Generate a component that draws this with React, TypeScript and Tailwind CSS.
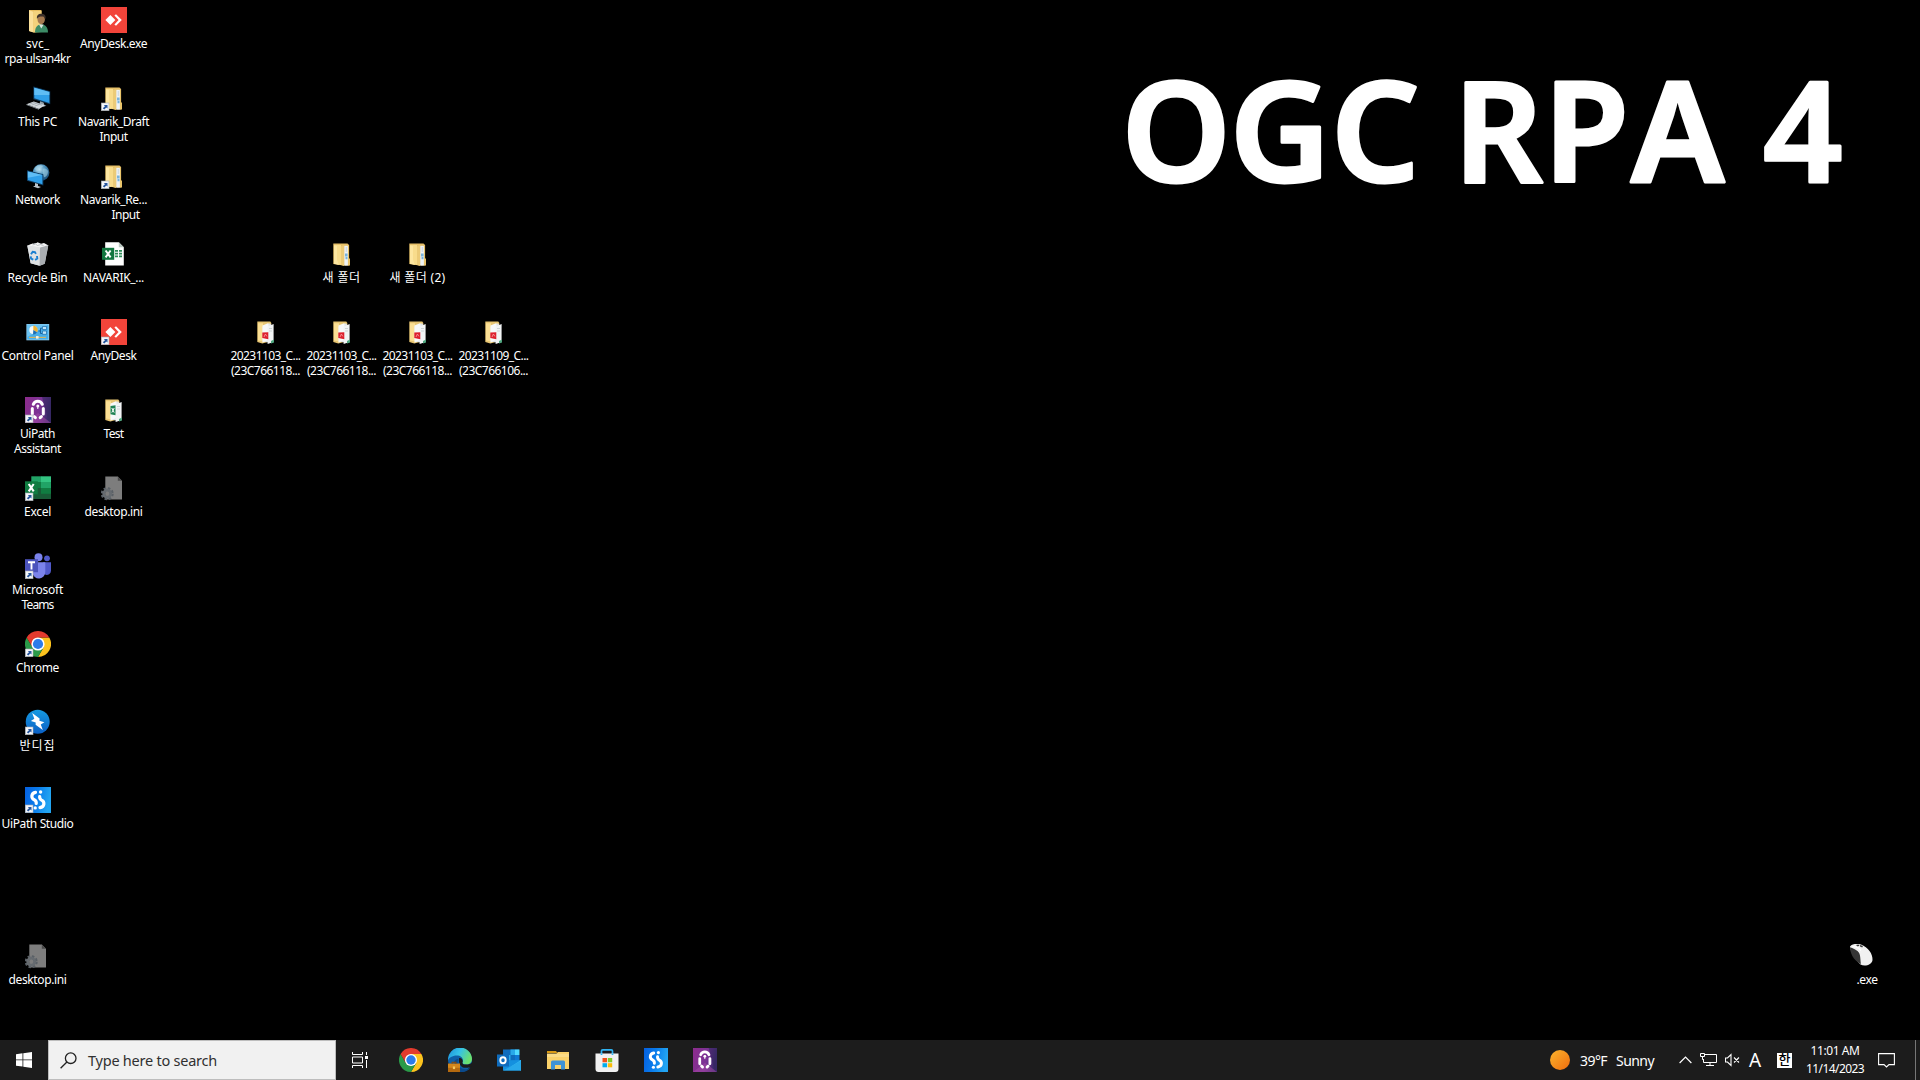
import { useLayoutEffect, useRef, type ReactNode } from "react";

/** A line of text whose tracking is adjusted so that it fills `w` pixels. */
function Fit({ w, children, className = "" }: { w: number; children: string; className?: string }) {
  const ref = useRef<HTMLSpanElement>(null);
  useLayoutEffect(() => {
    const el = ref.current;
    if (!el) return;
    el.style.letterSpacing = "0px";
    const natural = el.getBoundingClientRect().width;
    const gap = (w - natural) / children.length;
    el.style.letterSpacing = `${gap}px`;
  }, [w, children]);
  return (
    <span ref={ref} className={`inline-block whitespace-pre ${className}`}>
      {children}
    </span>
  );
}

function Svg({ children, size = 26, box = 26 }: { children: ReactNode; size?: number; box?: number }) {
  return (
    <svg width={size} height={size} viewBox={`0 0 ${box} ${box}`} className="block shrink-0">
      {children}
    </svg>
  );
}

const Shortcut = () => (
  <g>
    <rect x="0.3" y="18" width="7.7" height="7.7" fill="#f4f6f9" stroke="#a9adb3" strokeWidth="0.6" />
    <path d="M2.9 20h3.6v3.6L5.3 22.5 3.3 24.6 1.8 23.3 4 21.2z" fill="#27569d" />
  </g>
);

const FolderShape = () => (
  <g>
    <path d="M4.3 2.6h14.2l1.6 1.4v20.5h-5.8L4.3 23z" fill="#e6c069" />
    <path d="M5 4h7v20l-7-1.4z" fill="#f8dc8c" />
    <path d="M12 5.2 15 4v21l-3-1z" fill="#eccb77" />
    <path d="M15.3 4.8h3.6v19.8h-3.6z" fill="#eef3f7" />
    <path d="M16 12.5h2.6v3H16zM16.5 16h2v2.2h-2z" fill="#78b4dd" />
    <path d="M16.8 6h.8v5h-.8z" fill="#c2cfdb" />
    <path d="M19 4.5 20 6v11l1 1v6.4h-2z" fill="#e9c46b" />
    <path d="M5 4.4 8 5v14l2 5-5-1.2z" fill="#fde6a0" />
  </g>
);

const Folder = ({ link = false }) => (
  <Svg>
    <FolderShape />
    {link && <Shortcut />}
  </Svg>
);

const FolderDocs = ({ pdf = false }) => (
  <Svg>
    <path d="M4.3 2.6h13l1 1.4v18l-9 2.6-5-1.6z" fill="#e8c673" />
    <path d="M5 4.2h5v18.4l-5-1z" fill="#fbdf94" />
    <path d="M9.5 8 17 4.2l1.8 2.2V24l-9-1.5z" fill="#e1e6e8" />
    <path d="M9.5 6.4 15.5 4v16.8l-6 3z" fill="#f7f9fa" />
    <path d="m14.6 7.4 6-2.4v18l-6 2z" fill="#f2f4f5" />
    <path d="M16 9.5h3M16 12h3" stroke="#ced5d6" />
    <path d="m18 22 3-1.5v3l-3 1z" fill="#4fa67f" />
    {pdf ? (
      <>
        <path d="m9.3 13.5 6-.2v7l-6-1.2z" fill="#dd1f2d" />
        <path d="m11 18 1.4-3 1.5 2.4" stroke="#f7a3a7" strokeWidth=".8" fill="none" />
      </>
    ) : (
      <>
        <path d="m9.5 9 5-.8v10l-5-1z" fill="#208354" />
        <path d="m10.8 11 2.4 4.6M13.2 11l-2.4 4.6" stroke="#fff" strokeWidth="1" />
      </>
    )}
  </Svg>
);

const UserFolder = () => (
  <Svg>
    <path d="M4 3h12.5v21L9 25.6 4 24z" fill="#e7bd5f" />
    <path d="M4 3.3 8.5 4.8V25.6L4 24z" fill="#fbe09a" />
    <path d="M8.5 4h8v21l-8 .6z" fill="#f3d27c" />
    <path d="M10 25.4c0-5 2-8 6.3-8s6.700 3 6.700 8z" fill="#3c8b66" />
    <path d="m14 17.5 2.3 4 2.400-4z" fill="#d8e4dd" />
    <ellipse cx="16.2" cy="12.4" rx="3.7" ry="4.8" fill="#a4794f" />
    <path d="M12 12c-.6-3.600 1.400-5.200 4.300-5.200s5 1.500 4.200 5.200c-1-1.400-1.200-2.400-3-2.600-2.200 0-4.400-.2-5.500 2.600z" fill="#3b302a" />
  </Svg>
);

const ThisPC = () => (
  <Svg>
    <path d="m8.400 1.600 16.800 4.600v13L8.400 14.200z" fill="#0f3f66" />
    <path d="M9.300 2.800 24.300 7v11L9.300 13.300z" fill="#2f9fe9" />
    <path d="M9.300 2.800 24.300 7v3L9.300 10z" fill="#5fbdf5" />
    <path d="m15 16.300 3.600 1.100.8 2.600 2 .8-2.800 1-4-1.300z" fill="#93a2ad" />
    <path d="m1.400 19.200 7.400-2.700 11.200 3.700-6 3.700z" fill="#d5dade" />
    <path d="m4 19.300 5-1.800 8 2.700M6.400 20.200l5-1.800M9.500 21.200l5-1.900" stroke="#8b959d" strokeWidth=".6" fill="none" />
    <path d="m1.400 19.200 12.600 4.700v.9L1.400 20z" fill="#8c959c" />
  </Svg>
);

const Network = () => (
  <Svg>
    <defs>
      <radialGradient id="globe" cx=".4" cy=".3" r=".7">
        <stop offset="0" stopColor="#bfe3f3" />
        <stop offset=".5" stopColor="#4e93bd" />
        <stop offset="1" stopColor="#1c4f78" />
      </radialGradient>
    </defs>
    <circle cx="16" cy="9.6" r="8.4" fill="url(#globe)" />
    <path d="M10 5c2-3 6-3.500 8-2-1 2-3 2-4 4s-4 1-4-2zM18 6c2-1 4 0 5 2 0 4-2 6-4 6-1-3-2-5-1-8z" fill="#a8d4e6" opacity=".55" />
    <path d="m2 7.300 16.300 4v11.200L2 17.700z" fill="#0f3f66" />
    <path d="m2.900 8.500 14.500 3.600v9.100l-14.500-4.300z" fill="#2f9fe9" />
    <path d="m2.900 8.500 14.500 3.600-14.500 2.600z" fill="#5fbdf5" />
    <path d="m10 20 3 1v2l3 1-3 1.200-5-1.600 2-.8z" fill="#b9c3ca" />
  </Svg>
);

const RecycleBin = () => (
  <Svg>
    <path d="m2.300 4.600 8-2.600 13 2.300-3.600 18.400-5 2-9-2.400z" fill="#c9cdd0" />
    <path d="m2.300 4.600 12.700 2-.4 18.100-9-2.400z" fill="#dfe2e4" />
    <path d="m15 6.600 8.300-2.300-3.600 18.400-5 2z" fill="#a9adb1" />
    <path d="m3 4.500 4.500-2 2 1 3-2.300 3.500 1.500 3-.6 4 2.200-8 2.200z" fill="#f3f4f5" />
    <path d="m7.500 4 3-1 2 1.500 3-1 3 1" stroke="#a9afb4" strokeWidth=".7" fill="none" />
    <path d="m6 13.300 1.700-2.600 2.200.4 1 1.800M12 15l.3 2.600-2.200 1.300M8.300 18.700l-2.200-1-.4-2.300" stroke="#1b7fd0" strokeWidth="1.900" fill="none" />
  </Svg>
);

const ControlPanel = () => (
  <Svg>
    <rect x="1.400" y="5" width="22.800" height="16.300" fill="#8fd0f4" />
    <rect x="2.200" y="5.800" width="21.200" height="14.700" fill="#49aee8" />
    <path d="M2.200 5.800h21.200L2.200 18z" fill="#6bc3f2" />
    <circle cx="8.300" cy="11" r="4" fill="#f4fafd" />
    <path d="M8.300 11V6.600a4.400 4.400 0 0 1 3.800 6.600z" fill="#f1b233" />
    <path d="M8.300 11 12.100 13.200A4.400 4.400 0 0 1 8 15.400z" fill="#1b6fb4" />
    <path d="M13.500 12h2V9.200h1.500M15.500 12v2.500h1.500" stroke="#17629f" fill="none" />
    <path d="M17.500 7.500h4v3h-4zM17.500 12h4v3.300h-4z" fill="#bfe5f9" stroke="#1b6aa8" strokeWidth=".7" />
    <path d="M4 18.400h17" stroke="#d9b45b" strokeWidth="1.100" />
    <path d="M11 17h2.600v2.700H11z" fill="#f8f1d9" />
  </Svg>
);

const AnyDesk = ({ link = false }) => (
  <Svg>
    <rect width="26" height="26" fill="#f2443a" />
    <path d="m9.400 8 5 5-5 5-5-5z" fill="#fff" />
    <path d="m13.400 8.600 1.600-1.400 5.800 5.800-5.800 5.800-1.600-1.400 4.200-4.400z" fill="#fff" />
    {link && <Shortcut />}
  </Svg>
);

const ExcelFile = () => (
  <Svg>
    <path d="M4.200 1.300h13.600l5 5v18.300H4.200z" fill="#fdfefe" />
    <path d="m17.800 1.300 5 5h-5z" fill="#b9c7c0" />
    <path d="M14 9h3v1.700h-3zM18 9h3v1.700h-3zM14 11.800h3v1.700h-3zM18 11.800h3v1.700h-3zM14 14.600h3v1.700h-3zM18 14.600h3v1.700h-3z" fill="#2c8a57" />
    <rect x="1" y="6.800" width="12.200" height="12" fill="#12763f" />
    <path d="m4.600 9.500 5 6.800M9.600 9.500l-5 6.800" stroke="#fff" strokeWidth="2" />
  </Svg>
);

const Assistant = ({ link = false, size = 26 }) => (
  <Svg size={size}>
    <defs>
      <linearGradient id="violet" x2="1" y2=".25">
        <stop offset="0" stopColor="#8d2c8c" />
        <stop offset=".65" stopColor="#7a3395" />
        <stop offset="1" stopColor="#3b2a6c" />
      </linearGradient>
    </defs>
    <rect width="26" height="26" fill="url(#violet)" />
    <path d="M17 0h9v26h-2z" fill="#33265f" opacity=".6" />
    <path d="M13 16 26 26H0z" fill="#a84aa5" opacity=".5" />
    <g stroke="#fff" strokeWidth="3" fill="none" strokeLinecap="round">
      <path d="M8.300 7.300c.9-2.100 2.400-3 4.500-3s3.600.9 4.500 3" />
      <path d="M7.300 11.500v5.600M18.300 11.500v5.600" />
      <path d="M9.200 19.600 10.400 20.700M16.400 19.600 15.200 20.700" />
    </g>
    <path d="M12.800 8v4" stroke="#fff" strokeWidth="1" />
    <circle cx="12.800" cy="9" r="1.500" fill="#fff" />
    {link && <Shortcut />}
  </Svg>
);

const Excel = () => (
  <Svg>
    <path d="M6.300 1.300h10v6h-10z" fill="#21a366" />
    <path d="M16 1.300h10v6H16z" fill="#33c481" />
    <path d="M6.300 7h10v6h-10z" fill="#107c41" />
    <path d="M16 7h10v6H16z" fill="#21a366" />
    <path d="M6.300 13h10v6h-10z" fill="#185c37" />
    <path d="M16 13h10v6H16z" fill="#107c41" />
    <path d="M6.300 18.800H26v5.200H6.300z" fill="#185c37" />
    <rect y="6.300" width="12.800" height="13" fill="#107c41" />
    <path d="m3.700 9 5 7.300M8.700 9l-5 7.300" stroke="#fff" strokeWidth="2.100" />
    <Shortcut />
  </Svg>
);

const IniFile = () => (
  <Svg>
    <path d="M4.300 1.600h12.500l4.200 4.200v18.700H4.300z" fill="#7d7d7d" />
    <path d="m16.800 1.600 4.200 4.200h-4.200z" fill="#4a4a4a" />
    <circle cx="6.200" cy="18.700" r="5" fill="none" stroke="#5a6066" strokeWidth="3" strokeDasharray="2.300 1.630" />
    <circle cx="6.200" cy="18.700" r="3.500" fill="none" stroke="#666b70" strokeWidth="2.800" />
    <circle cx="6.200" cy="18.700" r="1.900" fill="#7d7d7d" />
  </Svg>
);

const Teams = () => (
  <Svg>
    <circle cx="22" cy="5.300" r="2.900" fill="#5059c9" />
    <path d="M18 9.200h8v8.300a4.300 4.300 0 0 1-6 4z" fill="#5059c9" />
    <circle cx="13.500" cy="4.300" r="4" fill="#7b83eb" />
    <path d="M7.500 9.200h12.800v9.300a6.400 6.400 0 0 1-12.800 1z" fill="#7b83eb" />
    <rect y="6.200" width="13" height="13" fill="#4b53bc" />
    <path d="M3 9.200h7M6.500 9.200v7.400" stroke="#fff" strokeWidth="1.900" />
    <Shortcut />
  </Svg>
);

const Chrome = ({ link = false, size = 26 }) => (
  <Svg size={size}>
    <path d="M24.260 6.500A13 13 0 0 1 13 26L18.630 16.250 13 6.500z" fill="#fcc31e" />
    <path d="M13 26A13 13 0 0 1 1.740 6.500L7.370 16.250 18.630 16.250z" fill="#2a9a48" />
    <path d="M1.740 6.500A13 13 0 0 1 24.260 6.500H13L8 12z" fill="#e33b2e" />
    <path d="M1.740 6.500 7.370 16.250 13 13V6.500z" fill="#e33b2e" />
    <circle cx="13" cy="13" r="6.600" fill="#fff" />
    <circle cx="13" cy="13" r="5.100" fill="#2b7bea" />
    {link && <Shortcut />}
  </Svg>
);

const Bandizip = () => (
  <Svg>
    <defs>
      <linearGradient id="bandi" x2="0" y2="1">
        <stop offset="0" stopColor="#169be2" />
        <stop offset="1" stopColor="#0a5fc4" />
      </linearGradient>
    </defs>
    <circle cx="12.700" cy="12.700" r="12" fill="url(#bandi)" />
    <path d="m7.200 4 7.400 5.500-.2 2.200 5 1.500-3.600 2.300 2 5.500-7.200-5.200.1-2.200-4.800-1.600 3.400-2.300z" fill="#fff" />
    <Shortcut />
  </Svg>
);

const Studio = ({ link = false, size = 26 }) => (
  <Svg size={size}>
    <defs>
      <linearGradient id="studio" x2="1" y2=".2">
        <stop offset="0" stopColor="#0560e0" />
        <stop offset=".5" stopColor="#0a7ceb" />
        <stop offset="1" stopColor="#23a5f2" />
      </linearGradient>
    </defs>
    <rect width="26" height="26" fill="url(#studio)" />
    <g stroke="#fff" strokeWidth="3.200" fill="none" strokeLinecap="round">
      <path d="M10.500 5.400C6 6.200 5.800 11.200 9.200 12.800 11 13.700 11.500 14.600 11.200 16.500" />
      <path d="M15 20.600C19.700 19.800 20 14.800 16.600 13.100 14.900 12.200 14.500 11.300 14.700 9.500" />
    </g>
    <circle cx="15.600" cy="5" r="1.700" fill="#fff" />
    <circle cx="10.200" cy="20.900" r="1.700" fill="#fff" />
    {link && <Shortcut />}
  </Svg>
);

const Mouse = () => (
  <Svg>
    <path d="M1 3.500C3 .8 8 .8 12 1.500c7 2.500 12 9.500 11.500 15.500-.4 5-8 7-12 4.500C8 18 2 11 1 3.500z" fill="#f1f1f1" />
    <path d="M1 4.500c2 0 4 1.500 7.500 3.500 3.500 3 2.500 8 3.500 13C7.500 19 1.500 13.500 1 4.500z" fill="#353535" />
    <path d="m7 2 2.500-.6 1 1.400-2 .8zM11 2l3 1-.8 1.400-2.200-1z" fill="#3c3c3c" />
    <path d="M3.500 3.500C6 3.500 10 5 12 7.500" stroke="#fff" strokeWidth="1.500" fill="none" />
  </Svg>
);

type Item = { cell: string; icon: ReactNode; lines: [string, number, string?][] };

const items: Item[] = [
  { cell: "col-start-1 row-start-1", icon: <UserFolder />, lines: [["svc_", 23], ["rpa-ulsan4kr", 66]] },
  { cell: "col-start-1 row-start-2", icon: <ThisPC />, lines: [["This PC", 39]] },
  { cell: "col-start-1 row-start-3", icon: <Network />, lines: [["Network", 45]] },
  { cell: "col-start-1 row-start-4", icon: <RecycleBin />, lines: [["Recycle Bin", 60]] },
  { cell: "col-start-1 row-start-5", icon: <ControlPanel />, lines: [["Control Panel", 72]] },
  { cell: "col-start-1 row-start-6", icon: <Assistant link />, lines: [["UiPath", 35], ["Assistant", 47]] },
  { cell: "col-start-1 row-start-7", icon: <Excel />, lines: [["Excel", 27]] },
  { cell: "col-start-1 row-start-8", icon: <Teams />, lines: [["Microsoft", 51], ["Teams", 32]] },
  { cell: "col-start-1 row-start-9", icon: <Chrome link />, lines: [["Chrome", 43]] },
  { cell: "col-start-1 row-start-10", icon: <Bandizip />, lines: [["반디집", 36]] },
  { cell: "col-start-1 row-start-11", icon: <Studio link />, lines: [["UiPath Studio", 72]] },
  { cell: "col-start-1 row-start-13", icon: <IniFile />, lines: [["desktop.ini", 58]] },
  { cell: "col-start-2 row-start-1", icon: <AnyDesk />, lines: [["AnyDesk.exe", 67]] },
  { cell: "col-start-2 row-start-2", icon: <Folder link />, lines: [["Navarik_Draft", 71], ["Input", 28]] },
  { cell: "col-start-2 row-start-3", icon: <Folder link />, lines: [["Navarik_Re...", 67], ["Input", 28, "ml-[24px]"]] },
  { cell: "col-start-2 row-start-4", icon: <ExcelFile />, lines: [["NAVARIK_...", 61]] },
  { cell: "col-start-2 row-start-5", icon: <AnyDesk link />, lines: [["AnyDesk", 46]] },
  { cell: "col-start-2 row-start-6", icon: <FolderDocs />, lines: [["Test", 20]] },
  { cell: "col-start-2 row-start-7", icon: <IniFile />, lines: [["desktop.ini", 58]] },
  { cell: "col-start-5 row-start-4", icon: <Folder />, lines: [["새 폴더", 38]] },
  { cell: "col-start-6 row-start-4", icon: <Folder />, lines: [["새 폴더 (2)", 56]] },
  { cell: "col-start-4 row-start-5", icon: <FolderDocs pdf />, lines: [["20231103_C...", 70], ["(23C766118...", 69]] },
  { cell: "col-start-5 row-start-5", icon: <FolderDocs pdf />, lines: [["20231103_C...", 70], ["(23C766118...", 69]] },
  { cell: "col-start-6 row-start-5", icon: <FolderDocs pdf />, lines: [["20231103_C...", 70], ["(23C766118...", 69]] },
  { cell: "col-start-7 row-start-5", icon: <FolderDocs pdf />, lines: [["20231109_C...", 70], ["(23C766106...", 69]] },
  { cell: "col-start-[25] row-start-13", icon: <Mouse />, lines: [[".exe", 21, "ml-[11px]"]] },
];

const Edge = () => (
  <Svg size={24}>
    <defs>
      <linearGradient id="edgeTop" x2="1" y2=".4">
        <stop offset="0" stopColor="#1b8fd8" />
        <stop offset=".5" stopColor="#35c1e8" />
        <stop offset="1" stopColor="#6be070" />
      </linearGradient>
    </defs>
    <circle cx="13" cy="13" r="13" fill="#0f5fa8" />
    <path d="M0 13A13 13 0 0 1 26 12c0 4-3 6-6 6-4 0-5-1.500-4-3.500C17 11 14 8 9.500 8 4.500 8 1 11 0 13z" fill="url(#edgeTop)" />
    <path d="M11 12c-2 5 1 11 8 11 2.500 0 4.500-1 5.500-2-2.500 4-7 5-11.500 5-4 0-8-5-7-9 .5-3 2.500-5 5-5z" fill="#0b4a8c" />
    <path d="M12 11c2-.5 4 1 4 3.500-1 2 0 3.500 4 3.500 2 0 5-.8 6-2v3c-1 1.500-3.500 2.500-7 2.500-5 0-8-5-7-10.500z" fill="#1c1c1c" />
    <rect x="0" y="17" width="13" height="9" fill="#b4690f" />
    <rect x="0" y="17" width="13" height="4.500" fill="#d2861c" />
    <path d="M4.500 17v-1.500h4V17" stroke="#8a4c09" strokeWidth="1.200" fill="none" />
    <rect x="5.300" y="20" width="2.400" height="2.800" fill="#f5c55b" />
  </Svg>
);

const Outlook = () => (
  <Svg size={24} box={24}>
    <path d="M6 1.500h16v14H6z" fill="#0f6cbd" />
    <path d="M13.500 1.500H18V7h-4.500zM9 7h4.500v5.500H9z" fill="#28a8ea" />
    <path d="M18 1.500h4.500V7H18z" fill="#50d9ff" />
    <path d="M18 7h4.500v5.500H18z" fill="#0f78d4" />
    <path d="M6 12.500 24 12v10.500H6z" fill="#1490df" />
    <path d="m24 12-10 6.500 10 4z" fill="#35b8f1" />
    <path d="M6 22.500 24 13v9.500z" fill="#28a8ea" />
    <rect x="0" y="6.500" width="12" height="12" fill="#0f6cbd" />
    <ellipse cx="6" cy="12.300" rx="2.700" ry="3" fill="none" stroke="#fff" strokeWidth="1.900" />
  </Svg>
);

const Explorer = () => (
  <Svg size={24} box={24}>
    <path d="M1 3h9l1.500 2H1z" fill="#d99a14" />
    <path d="M1 5.500h9.500L12 4h11v17H1z" fill="#fad16a" />
    <path d="M1 6h22v3H1z" fill="#fbdb86" />
    <path d="M5 21.500V14a1.500 1.500 0 0 1 1.500-1.500h11A1.500 1.500 0 0 1 19 14v7.500h-4V17H9v4.500z" fill="#3f93d6" />
  </Svg>
);

const Store = () => (
  <Svg size={24} box={24}>
    <path d="M6.500 6V3a1.200 1.200 0 0 1 1.200-1.200h8.600A1.200 1.200 0 0 1 17.500 3v3" stroke="#30b4f2" strokeWidth="1.700" fill="none" />
    <path d="M.5 5.500h23V21a3 3 0 0 1-3 3h-17a3 3 0 0 1-3-3z" fill="#f1f1f1" />
    <path d="M6.500 5.500V7M17.500 5.500V7" stroke="#30b4f2" strokeWidth="1.700" />
    <path d="M7.500 10H12v4.300H7.500z" fill="#f1511b" />
    <path d="M12.800 10h4.400v4.300h-4.400z" fill="#80cc28" />
    <path d="M7.500 15.200H12v4.100H7.500z" fill="#00adef" />
    <path d="M12.800 15.200h4.400v4.100h-4.400z" fill="#fbbc09" />
  </Svg>
);

const pinned = [<Chrome size={24} />, <Edge />, <Outlook />, <Explorer />, <Store />, <Studio size={24} />, <Assistant size={24} />];

function Taskbar() {
  return (
    <footer className="flex h-10 items-center bg-[#1c1c1c] text-white">
      <button className="flex h-10 w-12 items-center justify-center">
        <svg width="16" height="16" viewBox="0 0 16 16" className="block">
          <path d="M0 2.200 6.500 1.300v6.200H0zM7.300 1.200 16 0v7.500H7.300zM0 8.300h6.500v6.300L0 13.700zM7.300 8.300H16V16l-8.700-1.200z" fill="#fff" />
        </svg>
      </button>
      <div className="flex h-10 w-72 items-center border border-[#bdbdbd] bg-[#f1f1f1] pl-[11px] text-[#303030]">
        <svg width="17" height="17" viewBox="0 0 17 17" className="mr-[11px] block" fill="none" stroke="#222" strokeWidth="1.300">
          <circle cx="10.700" cy="6.200" r="5.300" />
          <path d="M6.900 10 .6 16.300" />
        </svg>
        <Fit w={129} className="text-[14.5px] leading-5">Type here to search</Fit>
      </div>
      <div className="flex w-12 justify-center">
        <svg width="16" height="16" viewBox="0 0 16 16" className="block" fill="none" stroke="#fff" strokeWidth="1">
          <path d="M.5 0v2.500h10V0M.5 16v-2.500h10V16M.5 5h10v6H.5zM14.500 0v3M14.500 8v8" />
          <path d="M13 4h3v3h-3z" fill="#fff" stroke="none" />
        </svg>
      </div>
      <div className="ml-[15px] flex w-[318px] justify-between">
        {pinned.map((icon, i) => (
          <div key={i}>{icon}</div>
        ))}
      </div>
      <div className="ml-auto flex h-10 items-center">
        <span className="mr-[10px] size-5 rounded-full bg-linear-to-br from-[#f9b32c] to-[#ee6b0c]" />
        <Fit w={27} className="mr-[9px] text-[14px]">39°F</Fit>
        <Fit w={38} className="text-[14px]">Sunny</Fit>
        <svg width="13" height="8" viewBox="0 0 13 8" className="ml-[25px] block" fill="none" stroke="#fff" strokeWidth="1.200">
          <path d="M.6 7 6.500 1.100 12.400 7" />
        </svg>
        <svg width="17" height="14" viewBox="0 0 17 14" className="mr-px ml-[8px] block" fill="none" stroke="#fff" strokeWidth="1">
          <path d="M5 1.500h11.500v8H3.500V6M10 9.500v3M6 12.500h8" />
          <path d="M.5.500h4v3h-4zM2.500 3.500v3h1" />
        </svg>
        <svg width="15" height="14" viewBox="0 0 15 14" className="ml-[7px] block" fill="none" stroke="#fff" strokeWidth="1.100">
          <path d="M.5 5h2L6 1.500v11L2.500 9h-2zM9 4.500l5 5M14 4.500l-5 5" />
        </svg>
        <Fit w={13} className="ml-[9px] text-[19px] leading-6">A</Fit>
        <span className="mr-px ml-[15px] flex size-[15px] items-center justify-center bg-white text-[13px] leading-none font-medium text-black">
          <span className="-mt-[2px]">한</span>
        </span>
        <div className="ml-[12px] flex w-[60px] flex-col items-center text-[12px] leading-[18px]">
          <Fit w={49}>11:01 AM</Fit>
          <Fit w={58}>11/14/2023</Fit>
        </div>
        <svg width="17" height="17" viewBox="0 0 17 17" className="ml-[13px] block" fill="none" stroke="#fff" strokeWidth="1.100">
          <path d="M.6 1.600h15.800v11h-5.400L8.500 15l-2.500-2.400H.6z" />
        </svg>
        <span className="mr-1 ml-[20px] h-10 w-px bg-[#777]" />
      </div>
    </footer>
  );
}

export default function App() {
  return (
    <div className="relative flex h-[1080px] w-[1920px] flex-col overflow-hidden bg-black font-['Noto_Sans','Noto_Sans_CJK_KR',sans-serif]">
      <h1 className="absolute top-0 left-0">
        <svg width="1920" height="260" viewBox="0 0 1920 260" className="block">
          <text
            y="182"
            x="1121.500 1229.500 1331 1453.500 1543.500 1631 1763"
            fontFamily="Noto Sans"
            fontWeight="600"
            fontSize="139"
            fill="#fff"
            stroke="#fff"
            strokeWidth="3"
            strokeLinejoin="round"
          >
            OGCRPA4
          </text>
        </svg>
      </h1>
      <main className="grid flex-1 grid-cols-[repeat(25,76px)] grid-rows-[repeat(13,78px)] content-start text-white">
        {items.map((item) => (
          <div key={item.cell} className={`flex flex-col items-center pt-[7px] ${item.cell}`}>
            {item.icon}
            <div className="mt-[3px] flex flex-col items-center pr-px text-[12px] leading-[15px]">
              {item.lines.map(([text, w, extra], i) => (
                <Fit key={i} w={w} className={extra}>
                  {text}
                </Fit>
              ))}
            </div>
          </div>
        ))}
      </main>
      <Taskbar />
    </div>
  );
}
